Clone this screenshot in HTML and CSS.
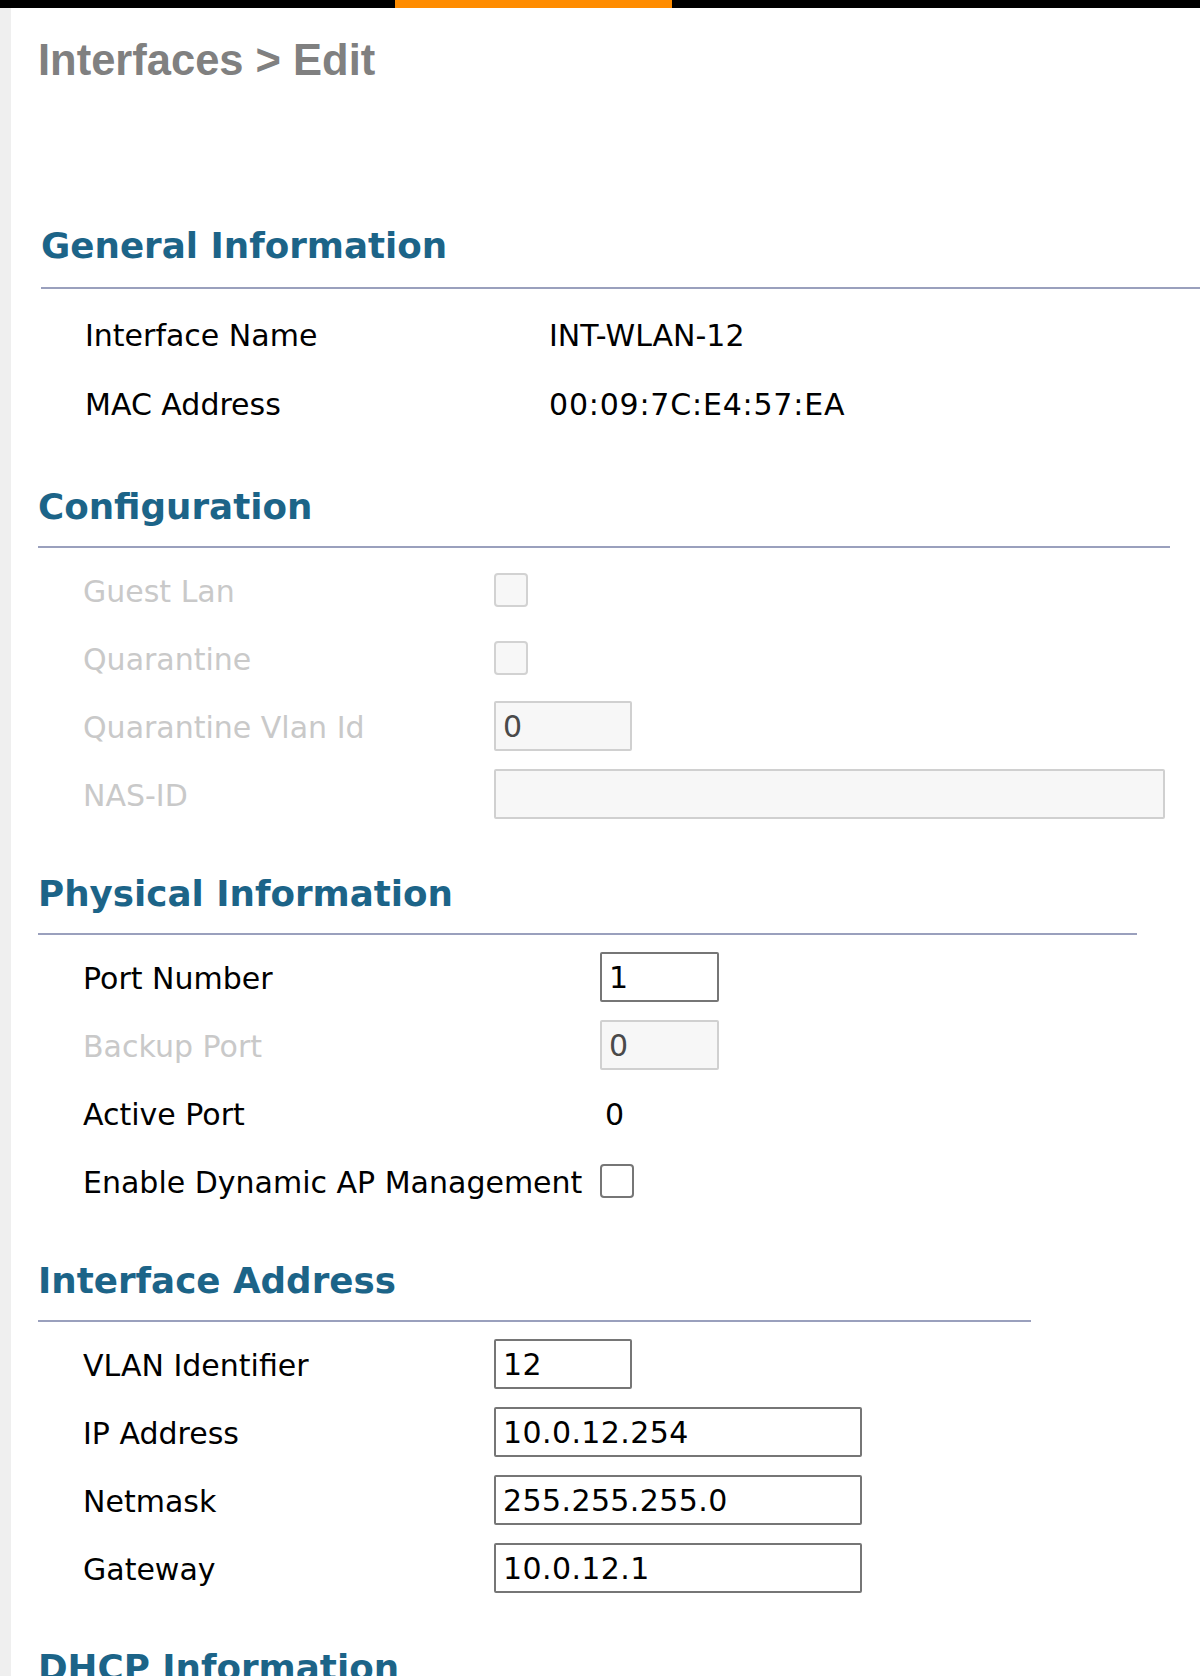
FILE: index.html
```html
<!DOCTYPE html>
<html lang="en">
<head>
<meta charset="utf-8">
<title>Interfaces &gt; Edit</title>
<link rel="stylesheet" href="styles.css">
</head>
<body>
<div class="topbar"><div class="topbar-accent"></div></div>
<div class="page">
  <div class="strip"></div>
  <main class="content">
    <h1 class="title">Interfaces &gt; Edit</h1>

    <section class="section section-general">
      <h2 class="section-head">General Information</h2>
      <div class="fields fields-general">
        <div class="label">Interface Name</div>
        <div class="value">INT-WLAN-12</div>
        <div class="label">MAC Address</div>
        <div class="value value-mac">00:09:7C:E4:57:EA</div>
      </div>
    </section>

    <section class="section section-config">
      <h2 class="section-head">Configuration</h2>
      <div class="fields fields-config">
        <div class="label label-disabled">Guest Lan</div>
        <div class="cell"><input type="checkbox" class="check" disabled></div>
        <div class="label label-disabled">Quarantine</div>
        <div class="cell"><input type="checkbox" class="check" disabled></div>
        <div class="label label-disabled">Quarantine Vlan Id</div>
        <div class="cell"><input type="text" class="field field-short" value="0" disabled></div>
        <div class="label label-disabled">NAS-ID</div>
        <div class="cell"><input type="text" class="field field-nas" value="" disabled></div>
      </div>
    </section>

    <section class="section section-physical">
      <h2 class="section-head">Physical Information</h2>
      <div class="fields fields-physical">
        <div class="label">Port Number</div>
        <div class="cell"><input type="text" class="field field-port" value="1"></div>
        <div class="label label-disabled">Backup Port</div>
        <div class="cell"><input type="text" class="field field-port" value="0" disabled></div>
        <div class="label">Active Port</div>
        <div class="value value-pad">0</div>
        <div class="label">Enable Dynamic AP Management</div>
        <div class="cell"><input type="checkbox" class="check"></div>
      </div>
    </section>

    <section class="section section-address">
      <h2 class="section-head">Interface Address</h2>
      <div class="fields fields-address">
        <div class="label">VLAN Identifier</div>
        <div class="cell"><input type="text" class="field field-short" value="12"></div>
        <div class="label">IP Address</div>
        <div class="cell"><input type="text" class="field field-long" value="10.0.12.254"></div>
        <div class="label">Netmask</div>
        <div class="cell"><input type="text" class="field field-long" value="255.255.255.0"></div>
        <div class="label">Gateway</div>
        <div class="cell"><input type="text" class="field field-long" value="10.0.12.1"></div>
      </div>
    </section>

    <section class="section section-dhcp">
      <h2 class="section-head">DHCP Information</h2>
    </section>
  </main>
</div>
</body>
</html>
```

FILE: styles.css
```css
html, body {
  margin: 0;
  padding: 0;
  background: #ffffff;
}

body {
  font-family: "DejaVu Sans", Verdana, sans-serif;
  color: #000000;
}

.topbar {
  height: 8px;
  background: #000000;
  display: flex;
}

.topbar-accent {
  margin-left: 395px;
  width: 277px;
  background: #ff8c00;
}

.page {
  display: flex;
  min-height: 1720px;
}

.strip {
  width: 11px;
  flex: 0 0 11px;
  background: #efefef;
}

.content {
  flex: 1;
  padding-left: 27px;
  padding-bottom: 40px;
}

.title {
  margin: 27px 0 0 0;
  font-family: "Liberation Sans", Arial, sans-serif;
  font-weight: 700;
  font-size: 43.5px;
  line-height: 50px;
  color: #808080;
}

.section {
  margin-top: 46px;
}

.section-general {
  margin-top: 141px;
  margin-left: 3px;
}

.section-config {
  margin-top: 50px;
}

.section-config { width: 1132px; }
.section-physical { width: 1099px; }
.section-address { width: 993px; }

.section-head {
  margin: 0;
  font-family: "DejaVu Sans", Verdana, sans-serif;
  font-weight: 700;
  font-size: 35.7px;
  line-height: 40px;
  color: #1c6488;
  padding-bottom: 19px;
  border-bottom: 2px solid #9aa0bd;
}

.section-general .section-head {
  padding-bottom: 21px;
}

.section-dhcp .section-head {
  border-bottom: none;
}

.fields {
  display: grid;
  grid-auto-rows: 68px;
  align-items: center;
  padding-left: 45px;
  margin-top: 8px;
  font-size: 30px;
}

.fields-general {
  grid-template-columns: 464px auto;
  grid-auto-rows: 69px;
  padding-left: 44px;
  margin-top: 10px;
}

.fields-config { grid-template-columns: 411px auto; }
.fields-physical { grid-template-columns: 517px auto; }
.fields-address { grid-template-columns: 411px auto; }

.label {
  padding-top: 3px;
  white-space: nowrap;
  color: #000000;
}

.label-disabled {
  color: #c9c9c9;
}

.value {
  padding-top: 3px;
  color: #000000;
  white-space: nowrap;
}

.value-mac {
  letter-spacing: 0.8px;
}

.value-pad {
  padding-left: 5px;
}

.cell {
  display: flex;
  align-items: center;
}

.check {
  appearance: none;
  -webkit-appearance: none;
  margin: 0;
  width: 34px;
  height: 34px;
  box-sizing: border-box;
  border: 2px solid #767676;
  border-radius: 4px;
  background: #ffffff;
}

.check:disabled {
  border-color: #d2d2d2;
  background: #f7f7f7;
}

.field {
  box-sizing: border-box;
  height: 50px;
  margin: 0;
  padding: 0 7px;
  border: 2px solid #767676;
  border-radius: 2px;
  background: #ffffff;
  font-family: "DejaVu Sans", Verdana, sans-serif;
  font-size: 30px;
  letter-spacing: 0.4px;
  color: #000000;
  outline: none;
}

.field:disabled {
  border-color: #d0d0d0;
  background: #f7f7f7;
  color: #4a4a4a;
}

.field-short { width: 138px; }
.field-long { width: 368px; }
.field-port { width: 119px; }
.field-nas { width: 671px; }
```
